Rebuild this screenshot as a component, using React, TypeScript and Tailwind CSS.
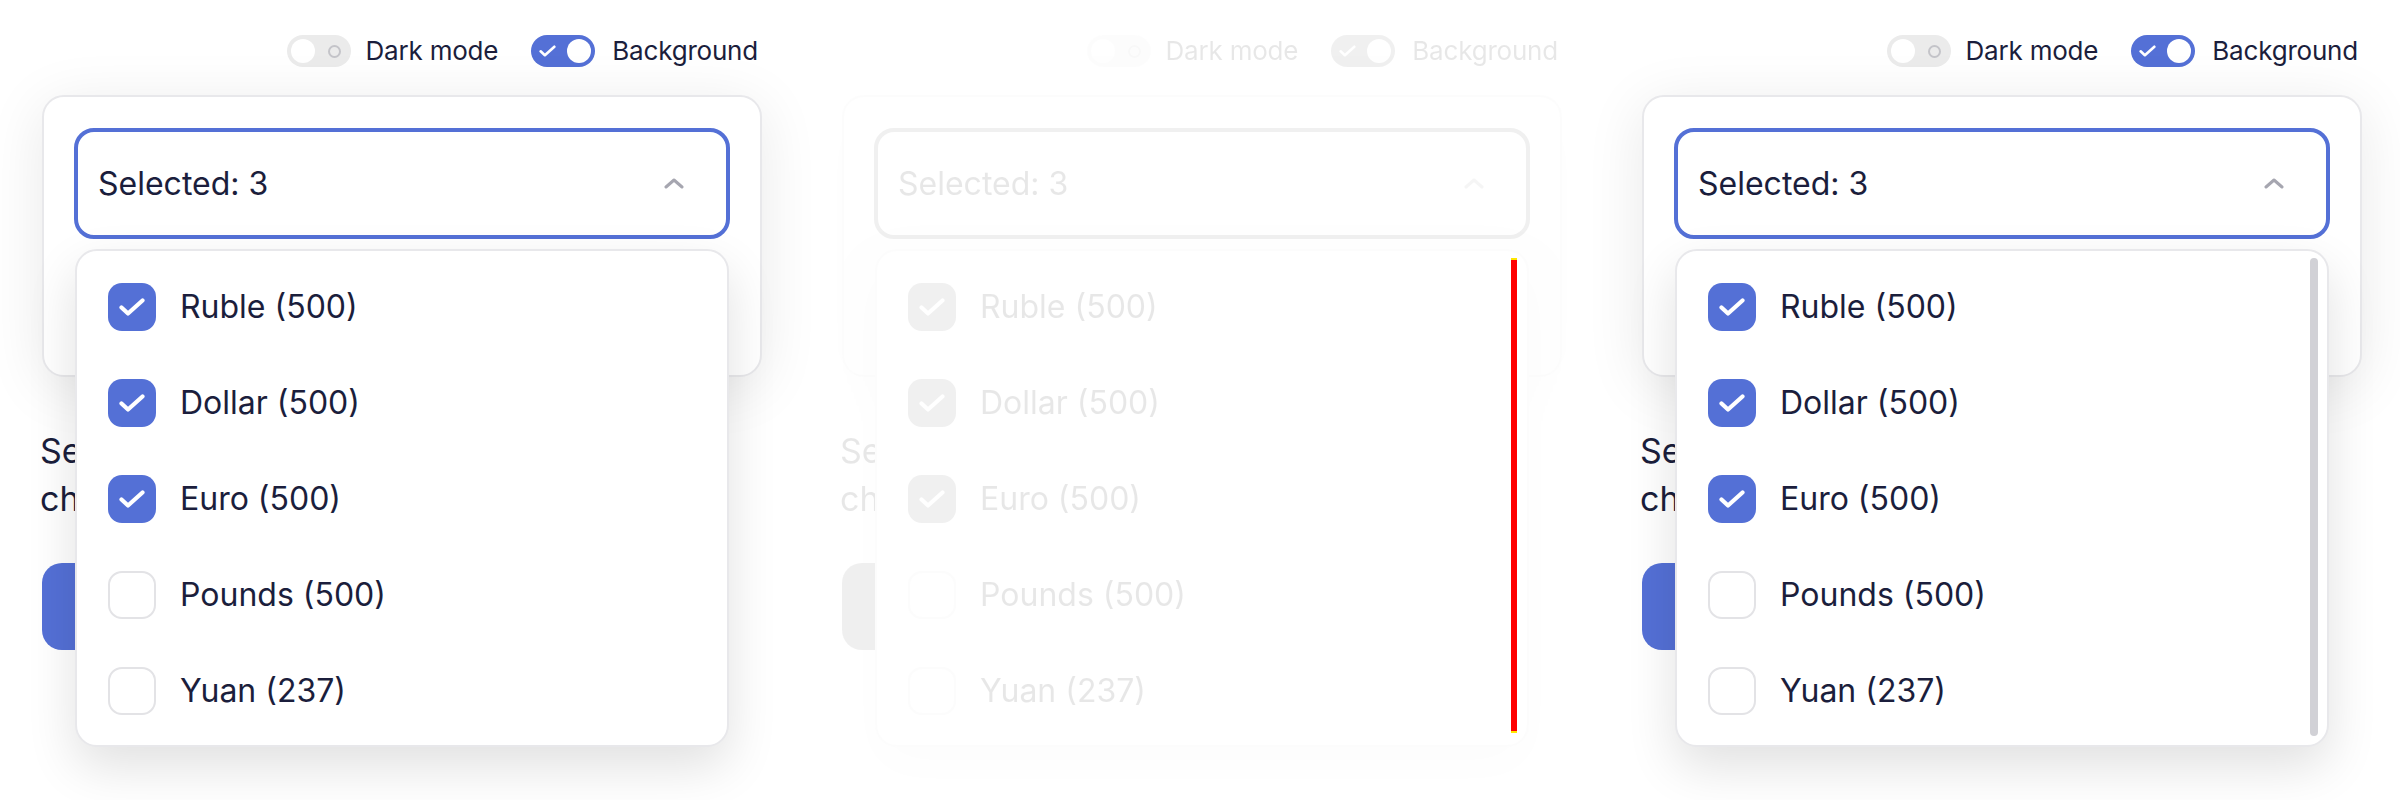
const options = [
  { label: "Ruble (500)", checked: true },
  { label: "Dollar (500)", checked: true },
  { label: "Euro (500)", checked: true },
  { label: "Pounds (500)", checked: false },
  { label: "Yuan (237)", checked: false },
];

const Tick = ({ w, h, stroke }: { w: number; h: number; stroke: number }) => (
  <svg width={w} height={h} viewBox="0 0 26 18" fill="none">
    <path
      d="M2.5 9.5 L9 15.5 L23.5 2.5"
      stroke="white"
      strokeWidth={stroke}
      strokeLinecap="round"
      strokeLinejoin="round"
    />
  </svg>
);

const SwitchOff = ({ label }: { label: string }) => (
  <div className="flex items-center gap-[15px]">
    <div className="flex h-8 w-16 items-center rounded-full bg-[#ebebeb] px-1">
      <div className="h-6 w-6 rounded-full bg-white" />
      <div className="ml-[13px] h-[13px] w-[13px] rounded-full border-2 border-[#c4c4c9]" />
    </div>
    <span className="text-[26px] leading-none tracking-[-0.2px]">{label}</span>
  </div>
);

const SwitchOn = ({ label }: { label: string }) => (
  <div className="flex items-center gap-[17px]">
    <div className="flex h-8 w-16 items-center justify-between rounded-full bg-[#5470d6] pl-2 pr-1">
      <Tick w={17} h={12} stroke={4} />
      <div className="h-6 w-6 rounded-full bg-white" />
    </div>
    <span className="text-[26px] leading-none tracking-[-0.2px]">{label}</span>
  </div>
);

const Panel = ({ faded, scrollbar }: { faded?: boolean; scrollbar?: boolean }) => (
  <div className="relative h-[800px] w-[800px] shrink-0 pl-[42px] pt-[35px]">
    <div className={faded ? "opacity-[0.1] grayscale" : ""}>
      <div className="flex w-[720px] items-center justify-end gap-[33px] pr-[4px]">
        <SwitchOff label="Dark mode" />
        <SwitchOn label="Background" />
      </div>

      <div className="relative mt-[28px] h-[282px] w-[720px] rounded-[22px] border-2 border-[#e8e8eb] bg-white px-[30px] pt-[31px] shadow-[0_10px_60px_rgba(0,0,0,0.09)]">
        <div className="relative">
          <div className="flex h-[111px] items-center justify-between rounded-[20px] border-4 border-[#5470d6] pl-5 pr-[42px]">
            <span className="text-[32px] leading-none">Selected: 3</span>
            <svg width="20" height="11" viewBox="0 0 20 11" fill="none">
              <path d="M2 9 L10 2 L18 9" stroke="#a6a6b0" strokeWidth="3" strokeLinecap="round" strokeLinejoin="round" />
            </svg>
          </div>

          <div className="absolute left-px right-px top-full z-10 mt-[10px] rounded-[22px] border-2 border-[#e8e8eb] bg-white pb-[6px] pt-[8px] shadow-[0_20px_50px_rgba(0,0,0,0.12)]">
            {options.map((o) => (
              <div key={o.label} className="flex h-24 items-center gap-6 pl-[31px]">
                {o.checked ? (
                  <div className="flex h-12 w-12 items-center justify-center rounded-[14px] bg-[#5470d6]">
                    <Tick w={26} h={18} stroke={4.2} />
                  </div>
                ) : (
                  <div className="h-12 w-12 rounded-[14px] border-2 border-[#e3e3e6] bg-white" />
                )}
                <span className="text-[32px] leading-none">{o.label}</span>
              </div>
            ))}
            {scrollbar && (
              <div className="absolute bottom-[9px] right-[9px] top-[7px] w-2 rounded-full bg-[#d1d1d6]" />
            )}
          </div>
        </div>
      </div>

      <div className="-ml-[2px] mt-[50px] text-[34px] leading-[48px]">
        <div>Select the currencies to show</div>
        <div>charts for</div>
      </div>

      <button className="mt-[40px] flex h-[87px] w-[400px] items-center justify-center rounded-[20px] bg-[#5470d6] text-[32px] text-white">
        Apply
      </button>
    </div>

    {faded && (
      <div className="absolute left-[711px] top-[258px] h-[475px] w-[6px] border-y-2 border-[#ffe600] bg-[#ff0000]" />
    )}
  </div>
);

const App = () => {
  return (
    <div className="flex h-[800px] w-[2400px] overflow-hidden bg-white font-['Inter',sans-serif] text-[#1b1e3c]">
      <Panel />
      <Panel faded />
      <Panel scrollbar />
    </div>
  );
};

export default App;
